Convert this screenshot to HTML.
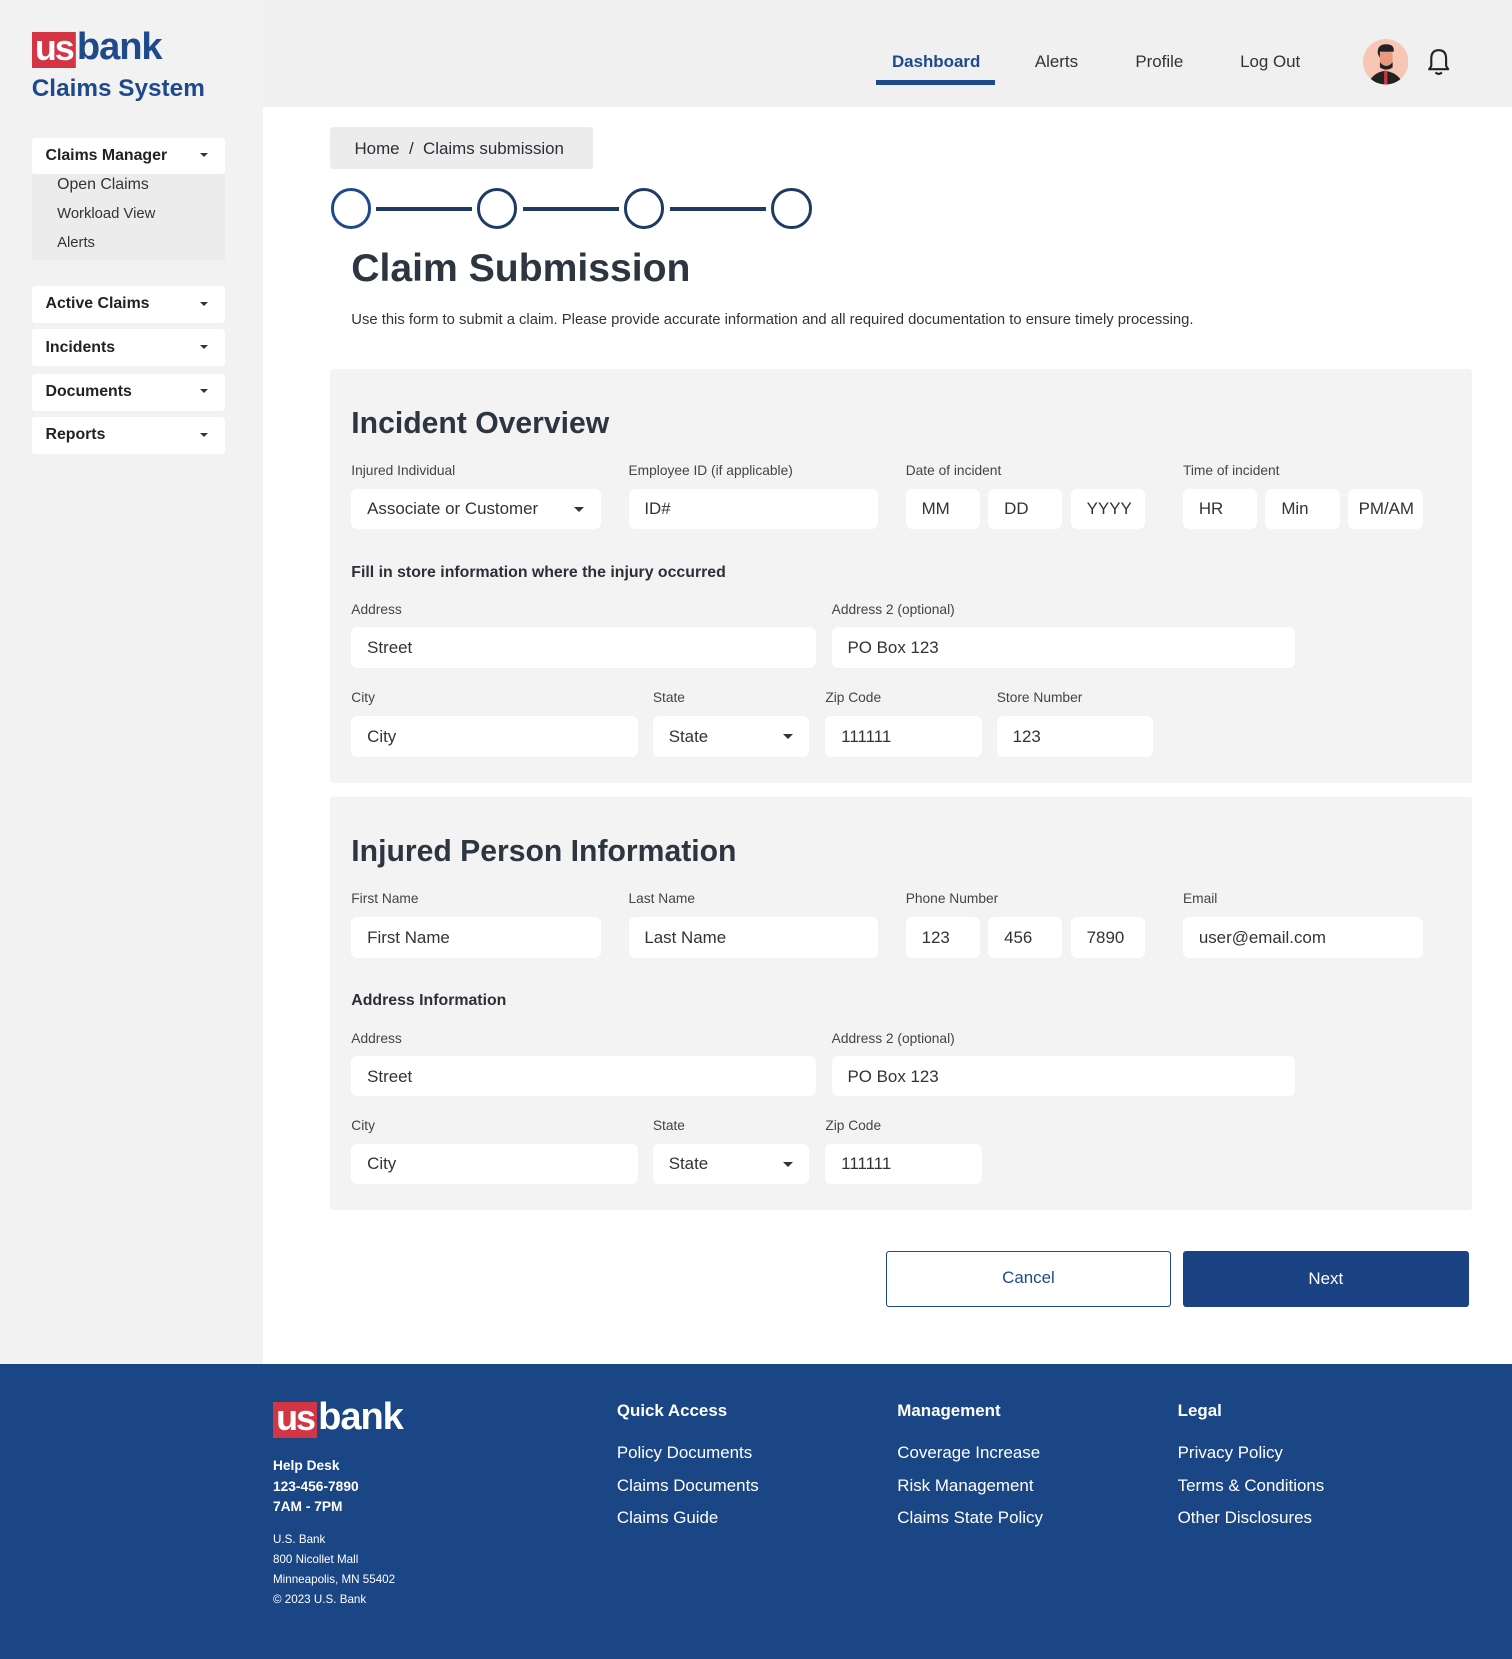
<!DOCTYPE html>
<html><head><meta charset="utf-8">
<style>
*{box-sizing:border-box;margin:0;padding:0}
html,body{width:1512px;height:1659px;overflow:hidden;background:#fff}
#w{zoom:1.0581;width:1429px;height:1568px;position:relative;font-family:"Liberation Sans",Arial,sans-serif;color:#2b2f36}
.a{position:absolute;white-space:nowrap}
.side{left:0;top:0;width:249px;height:1289px;background:#f2f2f3}
.hdr{left:249px;top:0;width:1180px;height:101px;background:#f0f0f0}
.nav{top:49px;font-size:16px;color:#333}
.sb{left:30px;width:183px;height:35px;background:#fff;border-radius:3px;font-weight:bold;font-size:15px;padding:9px 13px;color:#222}
.sb:after{content:"";position:absolute;right:16px;top:15px;border:4px solid transparent;border-top:4px solid #333}
.sub{font-size:14px;color:#333;left:54px}
.card{left:312px;width:1079px;height:391px;background:#f3f3f4;border-radius:3px}
.h2{font-size:28.5px;font-weight:bold;color:#2d3540;left:332px}
.lb{font-size:13px;color:#444}
.in{background:#fff;border-radius:6px;height:38px;font-size:16px;color:#333;padding:10px 15px}
.dd:after{content:"";position:absolute;right:16px;top:17px;border:5px solid transparent;border-top:5px solid #333}
.h3{font-size:15px;font-weight:bold;left:332px;color:#2b2f36}
.step{width:38px;height:38px;border:3.5px solid #1f3a63;border-radius:50%;top:178px}
.ln{height:3px;background:#1f3a63;top:196px;width:91px}
.logo{display:flex;align-items:flex-start}
.shield{background:#d33545;color:#fff;font-weight:900;font-size:34px;letter-spacing:-2px;line-height:30px;height:29px;padding:0 3px;position:relative;clip-path:polygon(0 0,100% 0,100% 100%,50% 120%,0 100%)}
.bk{font-weight:900;font-size:36px;letter-spacing:-1px;line-height:30px;margin-left:1px}
.ft{font-size:16px;color:#fff}
.fh{font-size:16px;font-weight:bold;color:#fff}
</style></head><body><div id="w">
<div class="a side"></div>
<div class="a hdr"></div>
<div class="a logo" style="left:30px;top:30px"><div class="shield" style="height:34px;padding-bottom:4px">us</div><div class="bk" style="color:#1e4a8c">bank</div></div>
<div class="a" style="left:30px;top:71px;font-size:23px;font-weight:bold;color:#1e4a8c">Claims System</div>
<div class="a sb" style="top:130px;height:34px">Claims Manager</div>
<div class="a" style="left:30px;top:164px;width:183px;height:82px;background:#ececed"></div>
<div class="a sub" style="top:166px;font-size:15px">Open Claims</div>
<div class="a sub" style="top:195px">Workload View</div>
<div class="a sub" style="top:222px">Alerts</div>
<div class="a sb" style="top:270px">Active Claims</div>
<div class="a sb" style="top:311px">Incidents</div>
<div class="a sb" style="top:353px">Documents</div>
<div class="a sb" style="top:394px">Reports</div>

<div class="a nav" style="left:843px;color:#1e4a8c;font-weight:bold">Dashboard</div>
<div class="a" style="left:828px;top:76px;width:112px;height:4px;background:#1e4a8c"></div>
<div class="a nav" style="left:978px">Alerts</div>
<div class="a nav" style="left:1073px">Profile</div>
<div class="a nav" style="left:1172px">Log Out</div>
<svg class="a" style="left:1288px;top:37px" width="43" height="43" viewBox="0 0 43 43"><defs><clipPath id="c"><circle cx="21.5" cy="21.5" r="21.5"/></clipPath></defs><circle cx="21.5" cy="21.5" r="21.5" fill="#f8c6b5"/><g clip-path="url(#c)"><path d="M5 43 Q8 32 21 30 Q34 32 38 43Z" fill="#222"/><rect x="20" y="30" width="3" height="13" fill="#d33545"/><rect x="16" y="12" width="12" height="16" rx="3" fill="#e89a80"/><path d="M14 14 Q13 5 22 5 Q30 5 29 12 L16 12 L16 18Z" fill="#222"/><path d="M16 22 Q22 29 28 22 L28 27 Q22 31 16 27Z" fill="#222"/></g></svg>
<svg class="a" style="left:1348px;top:44px" width="24" height="28" viewBox="0 0 24 28"><path d="M3 21 L21 21 L19 18 L19 11 Q19 3 12 3 Q5 3 5 11 L5 18Z" fill="none" stroke="#222" stroke-width="2" stroke-linejoin="round"/><path d="M9 24 Q12 27 15 24" fill="none" stroke="#222" stroke-width="2"/></svg>

<div class="a" style="left:312px;top:120px;width:248px;height:40px;background:#ececec;border-radius:3px;font-size:16px;padding:11px 23px;color:#2b2f36">Home &nbsp;/&nbsp; Claims submission</div>
<div class="a step" style="left:313px;border-color:#1e4a8c"></div>
<div class="a ln" style="left:355px"></div>
<div class="a step" style="left:451px"></div>
<div class="a ln" style="left:494px"></div>
<div class="a step" style="left:590px"></div>
<div class="a ln" style="left:633px"></div>
<div class="a step" style="left:729px"></div>
<div class="a" style="left:332px;top:233px;font-size:37px;font-weight:bold;color:#2d3540">Claim Submission</div>
<div class="a" style="left:332px;top:295px;font-size:14px;color:#333">Use this form to submit a claim. Please provide accurate information and all required documentation to ensure timely processing.</div>

<div class="a card" style="top:349px"></div>
<div class="a h2" style="top:385px">Incident Overview</div>
<div class="a lb" style="left:332px;top:438px">Injured Individual</div>
<div class="a lb" style="left:594px;top:438px">Employee ID (if applicable)</div>
<div class="a lb" style="left:856px;top:438px">Date of incident</div>
<div class="a lb" style="left:1118px;top:438px">Time of incident</div>
<div class="a in dd" style="left:332px;top:462px;width:236px;padding-right:40px">Associate or Customer</div>
<div class="a in" style="left:594px;top:462px;width:236px">ID#</div>
<div class="a in" style="left:856px;top:462px;width:70px">MM</div>
<div class="a in" style="left:934px;top:462px;width:70px">DD</div>
<div class="a in" style="left:1012px;top:462px;width:70px">YYYY</div>
<div class="a in" style="left:1118px;top:462px;width:70px">HR</div>
<div class="a in" style="left:1196px;top:462px;width:70px">Min</div>
<div class="a in" style="left:1274px;top:462px;width:71px;padding-left:10px">PM/AM</div>
<div class="a h3" style="top:533px">Fill in store information where the injury occurred</div>
<div class="a lb" style="left:332px;top:569px">Address</div>
<div class="a lb" style="left:786px;top:569px">Address 2 (optional)</div>
<div class="a in" style="left:332px;top:593px;width:439px">Street</div>
<div class="a in" style="left:786px;top:593px;width:438px">PO Box 123</div>
<div class="a lb" style="left:332px;top:652px">City</div>
<div class="a lb" style="left:617px;top:652px">State</div>
<div class="a lb" style="left:780px;top:652px">Zip Code</div>
<div class="a lb" style="left:942px;top:652px">Store Number</div>
<div class="a in" style="left:332px;top:677px;width:271px">City</div>
<div class="a in dd" style="left:617px;top:677px;width:148px">State</div>
<div class="a in" style="left:780px;top:677px;width:148px">111111</div>
<div class="a in" style="left:942px;top:677px;width:148px">123</div>

<div class="a card" style="top:753px"></div>
<div class="a h2" style="top:789px">Injured Person Information</div>
<div class="a lb" style="left:332px;top:842px">First Name</div>
<div class="a lb" style="left:594px;top:842px">Last Name</div>
<div class="a lb" style="left:856px;top:842px">Phone Number</div>
<div class="a lb" style="left:1118px;top:842px">Email</div>
<div class="a in" style="left:332px;top:867px;width:236px">First Name</div>
<div class="a in" style="left:594px;top:867px;width:236px">Last Name</div>
<div class="a in" style="left:856px;top:867px;width:70px">123</div>
<div class="a in" style="left:934px;top:867px;width:70px">456</div>
<div class="a in" style="left:1012px;top:867px;width:70px">7890</div>
<div class="a in" style="left:1118px;top:867px;width:227px">user@email.com</div>
<div class="a h3" style="top:938px">Address Information</div>
<div class="a lb" style="left:332px;top:974px">Address</div>
<div class="a lb" style="left:786px;top:974px">Address 2 (optional)</div>
<div class="a in" style="left:332px;top:998px;width:439px">Street</div>
<div class="a in" style="left:786px;top:998px;width:438px">PO Box 123</div>
<div class="a lb" style="left:332px;top:1057px">City</div>
<div class="a lb" style="left:617px;top:1057px">State</div>
<div class="a lb" style="left:780px;top:1057px">Zip Code</div>
<div class="a in" style="left:332px;top:1081px;width:271px">City</div>
<div class="a in dd" style="left:617px;top:1081px;width:148px">State</div>
<div class="a in" style="left:780px;top:1081px;width:148px">111111</div>

<div class="a" style="left:837px;top:1182px;width:270px;height:53px;border:1.5px solid #1e4a8c;border-radius:3px;text-align:center;line-height:50px;font-size:16px;color:#1e4a8c">Cancel</div>
<div class="a" style="left:1118px;top:1182px;width:270px;height:53px;background:#1b4383;border-radius:3px;text-align:center;line-height:53px;font-size:16px;color:#fff">Next</div>

<div class="a" style="left:0;top:1289px;width:1429px;height:279px;background:#1a4686"></div>
<div class="a logo" style="left:258px;top:1325px"><div class="shield" style="height:34px;padding-bottom:4px">us</div><div class="bk" style="color:#fff">bank</div></div>
<div class="a" style="left:258px;top:1376px;font-size:13px;font-weight:bold;color:#fff;line-height:19.5px">Help Desk<br>123-456-7890<br>7AM - 7PM</div>
<div class="a" style="left:258px;top:1446px;font-size:11px;color:#fff;line-height:19px">U.S. Bank<br>800 Nicollet Mall<br>Minneapolis, MN 55402<br>© 2023 U.S. Bank</div>
<div class="a fh" style="left:583px;top:1324px">Quick Access</div>
<div class="a ft" style="left:583px;top:1358px;line-height:31px">Policy Documents<br>Claims Documents<br>Claims Guide</div>
<div class="a fh" style="left:848px;top:1324px">Management</div>
<div class="a ft" style="left:848px;top:1358px;line-height:31px">Coverage Increase<br>Risk Management<br>Claims State Policy</div>
<div class="a fh" style="left:1113px;top:1324px">Legal</div>
<div class="a ft" style="left:1113px;top:1358px;line-height:31px">Privacy Policy<br>Terms &amp; Conditions<br>Other Disclosures</div>
</div></body></html>
